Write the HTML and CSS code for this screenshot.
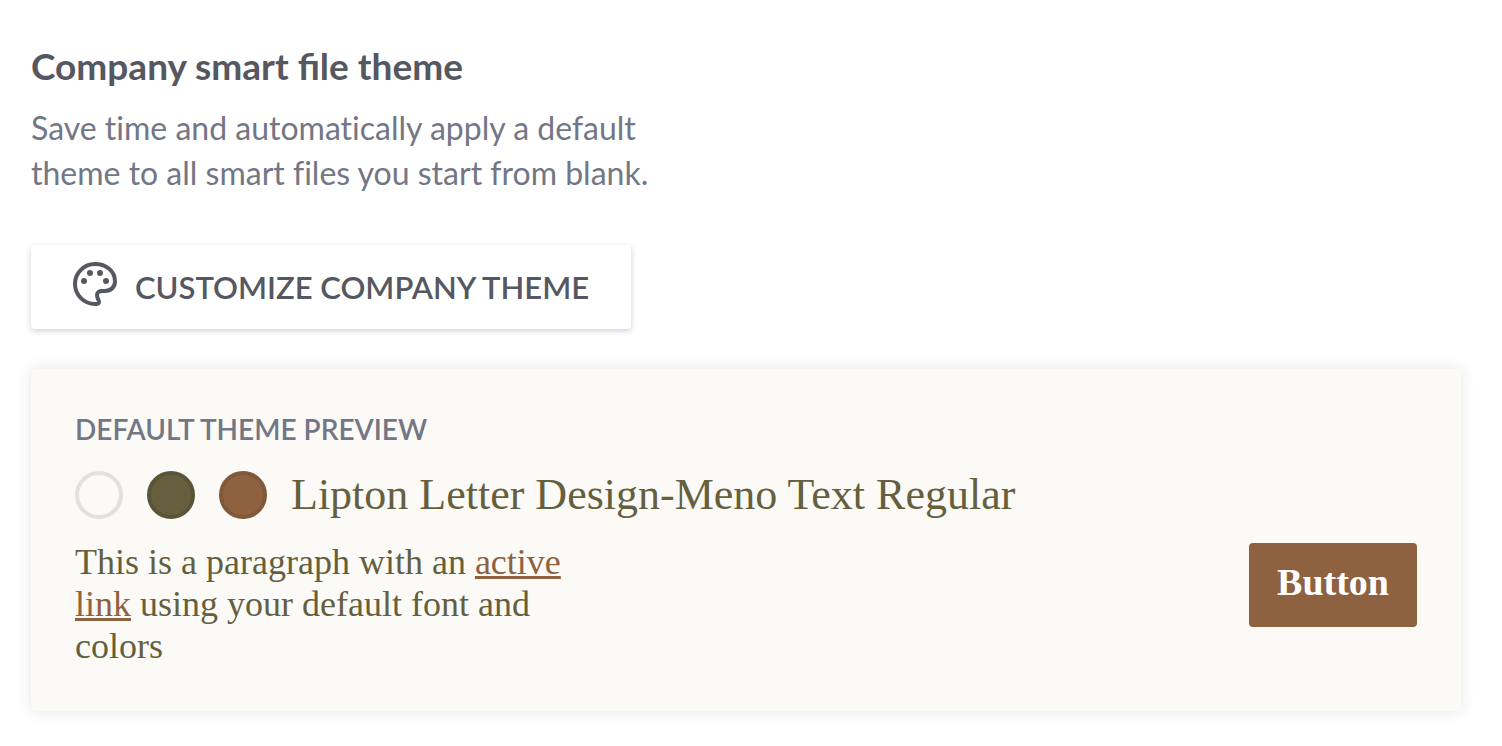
FILE: index.html
```html
<!DOCTYPE html>
<html lang="en">
<head>
<meta charset="utf-8">
<title>Company smart file theme</title>
<link rel="stylesheet" href="styles.css">
</head>
<body>
<main class="page">
  <h1 class="title">Company smart file theme</h1>
  <p class="description">Save time and automatically apply a default<br>theme to all smart files you start from blank.</p>
  <button class="customize" type="button">
    <svg class="palette" viewBox="0 0 44 44" aria-hidden="true">
      <path d="M22 2C11 2 2 11 2 22s9 20 20 20h2c2 0 2.600-2 1.600-3.600C24.600 36.600 24 35 24 33c0-2.500 2-4 5-4h3c6 0 10-4 10-9.500C42 9 33 2 22 2z" fill="none" stroke="currentColor" stroke-width="4"/>
      <circle cx="11" cy="19" r="3"/><circle cx="17" cy="11" r="3"/><circle cx="27" cy="11" r="3"/><circle cx="33" cy="19" r="3"/>
    </svg>
    <span>CUSTOMIZE COMPANY THEME</span>
  </button>
  <section class="preview">
    <h2 class="label">DEFAULT THEME PREVIEW</h2>
    <div class="theme">
      <span class="swatch light"></span>
      <span class="swatch olive"></span>
      <span class="swatch brown"></span>
      <span class="font-name">Lipton Letter Design-Meno Text Regular</span>
    </div>
    <div class="sample">
      <p class="paragraph">This is a paragraph with an <a href="#">active<br>link</a> using your default font and<br>colors</p>
      <button class="action" type="button">Button</button>
    </div>
  </section>
</main>
</body>
</html>
```
FILE: styles.css
```css
* { box-sizing: border-box; }
body { margin: 0; background: #fff; color: #555761; font-family: Lato, sans-serif; }
.page { padding: 42px 41px 34px 31px; }
.title { margin: 0; font-size: 37px; line-height: 48px; font-weight: 700; }
.description { margin: 15px 0 50px; color: #737685; font-size: 32px; line-height: 45px; font-variant-ligatures: none; }
.customize { display: flex; align-items: center; gap: 18px; height: 84px; padding: 0 42px; border: 0; border-radius: 4px; background: #fff; box-shadow: 0 2px 6px #cfd1db; color: #555761; font: 600 31px/40px Lato, sans-serif; white-space: nowrap; }
.palette { width: 44px; height: 44px; margin-bottom: 6px; overflow: visible; fill: currentColor; }
.preview { margin-top: 40px; padding: 44px; border-radius: 4px; background: #fbfaf7; box-shadow: 0 0 16px #e6e6e6; color: #655f3e; font-family: "Liberation Serif", serif; }
.label { margin: 0; color: #737685; font: 600 28px/32px Lato, sans-serif; }
.theme { display: flex; align-items: center; gap: 24px; margin-top: 24px; }
.swatch { width: 48px; height: 48px; border: 4px solid #e2e1de; border-radius: 50%; }
.light { background: #fbfaf7; }
.olive { border-color: #5b5537; background: #655f3e; }
.brown { border-color: #80583a; background: #8e6241; }
.font-name { font-size: 44px; line-height: 52px; white-space: nowrap; }
.sample { display: flex; align-items: flex-start; justify-content: space-between; }
.paragraph { margin: 20px 0 0; font-size: 36px; line-height: 42px; }
.paragraph a { color: #8e6241; text-decoration-thickness: 3px; }
.action { height: 84px; margin-top: 22px; padding: 0 28px 6px; border: 0; border-radius: 4px; background: #8e6241; color: #fff; font: 700 38px/44px "Liberation Serif", serif; }
```
